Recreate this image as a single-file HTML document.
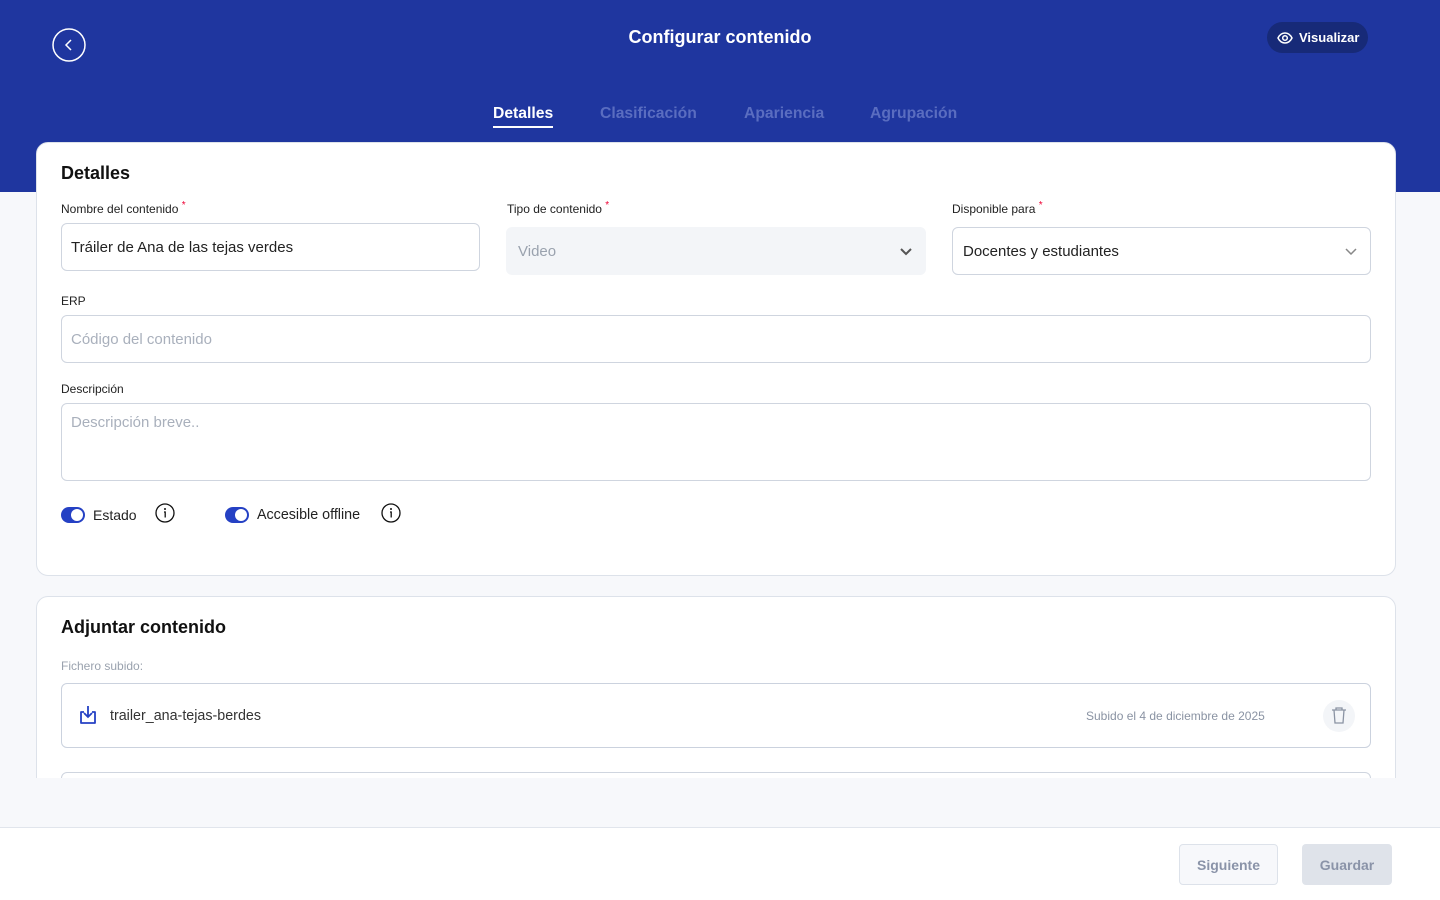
<!DOCTYPE html><html><head><meta charset="utf-8"><style>
*{box-sizing:border-box;margin:0;padding:0}
body{width:1440px;height:900px;background:#f7f8fb;font-family:"Liberation Sans",sans-serif;position:relative;overflow:hidden;color:#111}
.hdr{position:absolute;left:0;top:0;width:1440px;height:192px;background:#1f369f}
.abs{position:absolute}
.card{position:absolute;left:36px;width:1360px;background:#fff;border:1px solid #dde2ea;border-radius:12px}
.lbl{position:absolute;font-size:12px;color:#222}
.lbl sup{color:#e03;font-size:10px}
.inp{position:absolute;border:1px solid #cfd5df;border-radius:6px;background:#fff;font-size:15px;color:#222;padding-left:9px;display:flex;align-items:center}
.ph{color:#a9b0bc}
.tab{position:absolute;top:105px;font-size:15.7px;font-weight:bold;color:#5a6dc0}
</style></head><body>
<div class="hdr"></div>
<svg class="abs" style="left:52px;top:28px" width="34" height="34"><circle cx="17" cy="17" r="16" fill="none" stroke="#fff" stroke-width="1.5"/><path d="M19 12l-5 5 5 5" fill="none" stroke="#fff" stroke-width="1.5"/></svg>
<div class="abs" style="left:0;width:1440px;top:27px;text-align:center;color:#fff;font-size:18px;font-weight:bold">Configurar contenido</div>
<div class="abs" style="left:1267px;top:22px;width:101px;height:31px;border-radius:16px;background:#172a78;color:#fff;font-size:13px;font-weight:bold;display:flex;align-items:center;padding-left:10px">
<svg width="16" height="16" style="margin-right:6px"><path d="M1 8C3 4 6 3 8 3s5 1 7 5c-2 4-5 5-7 5S3 12 1 8z" fill="none" stroke="#fff" stroke-width="1.5"/><circle cx="8" cy="8" r="2.3" fill="none" stroke="#fff" stroke-width="1.5"/></svg>Visualizar</div>
<div class="tab" style="left:493px;color:#fff">Detalles<div style="height:2px;background:#fff;margin-top:3px"></div></div>
<div class="tab" style="left:600px">Clasificación</div>
<div class="tab" style="left:744px">Apariencia</div>
<div class="tab" style="left:870px">Agrupación</div>

<div class="card" style="top:142px;height:434px"></div>
<div class="abs" style="left:61px;top:163px;font-size:18px;font-weight:bold">Detalles</div>
<div class="lbl" style="left:61px;top:200px">Nombre del contenido <sup>*</sup></div>
<div class="lbl" style="left:507px;top:200px">Tipo de contenido <sup>*</sup></div>
<div class="lbl" style="left:952px;top:200px">Disponible para <sup>*</sup></div>
<div class="inp" style="left:61px;top:223px;width:419px;height:48px">Tráiler de Ana de las tejas verdes</div>
<div class="inp" style="left:506px;top:227px;width:420px;height:48px;background:#f3f5f8;border-color:#f3f5f8;color:#9aa2ae;padding-left:11px">Video<svg class="abs" style="right:12px;top:19px" width="14" height="10"><path d="M2 2l5 5 5-5" fill="none" stroke="#555" stroke-width="2"/></svg></div>
<div class="inp" style="left:952px;top:227px;width:419px;height:48px;padding-left:10px">Docentes y estudiantes<svg class="abs" style="right:12px;top:19px" width="14" height="10"><path d="M2 2l5 5 5-5" fill="none" stroke="#888" stroke-width="1.5"/></svg></div>
<div class="lbl" style="left:61px;top:294px">ERP</div>
<div class="inp" style="left:61px;top:315px;width:1310px;height:48px"><span class="ph">Código del contenido</span></div>
<div class="lbl" style="left:61px;top:382px">Descripción</div>
<div class="inp" style="left:61px;top:403px;width:1310px;height:78px;align-items:flex-start;padding-top:10px"><span class="ph">Descripción breve..</span></div>
<div class="abs" style="left:61px;top:507px;width:24px;height:16px;border-radius:8px;background:#2541c4"><div style="position:absolute;right:2px;top:2px;width:12px;height:12px;border-radius:6px;background:#fff"></div></div>
<div class="abs" style="left:93px;top:507px;font-size:14px;color:#222">Estado</div>
<svg class="abs" style="left:155px;top:503px" width="20" height="20"><circle cx="10" cy="10" r="9" fill="none" stroke="#111" stroke-width="1.3"/><circle cx="10" cy="6" r="1" fill="#111"/><path d="M9 9h1.2v5.5" fill="none" stroke="#111" stroke-width="1.3"/></svg>
<div class="abs" style="left:225px;top:507px;width:24px;height:16px;border-radius:8px;background:#2541c4"><div style="position:absolute;right:2px;top:2px;width:12px;height:12px;border-radius:6px;background:#fff"></div></div>
<div class="abs" style="left:257px;top:507px;font-size:14.3px;color:#222">Accesible offline</div>
<svg class="abs" style="left:381px;top:503px" width="20" height="20"><circle cx="10" cy="10" r="9" fill="none" stroke="#111" stroke-width="1.3"/><circle cx="10" cy="6" r="1" fill="#111"/><path d="M9 9h1.2v5.5" fill="none" stroke="#111" stroke-width="1.3"/></svg>

<div class="card" style="top:596px;height:260px"></div>
<div class="abs" style="left:61px;top:617px;font-size:18px;font-weight:bold">Adjuntar contenido</div>
<div class="abs" style="left:61px;top:659px;font-size:12px;color:#9aa2ae">Fichero subido:</div>
<div class="inp" style="left:61px;top:683px;width:1310px;height:65px;border-color:#cbd2de">
<svg class="abs" style="left:15px;top:20px" width="22" height="22"><path d="M7 8H4v11h14V8h-3" fill="none" stroke="#2541c4" stroke-width="1.8" stroke-linejoin="round"/><path d="M11 2v11M7 9l4 4 4-4" fill="none" stroke="#2541c4" stroke-width="1.8"/></svg>
<span style="position:absolute;left:48px;top:24px;font-size:14.3px;color:#333">trailer_ana-tejas-berdes</span>
<span style="position:absolute;left:1024px;top:25px;font-size:12px;color:#8a93a3">Subido el 4 de diciembre de 2025</span>
<div style="position:absolute;left:1261px;top:16px;width:32px;height:32px;border-radius:16px;background:#f3f5f8"><svg width="32" height="32"><path d="M9 10h14M13 10V8h6v2M11 10l1 13h8l1-13" fill="none" stroke="#8a93a3" stroke-width="1.3"/></svg></div>
</div>
<div class="inp" style="left:61px;top:772px;width:1310px;height:60px"></div>
<div class="abs" style="left:0;top:778px;width:1440px;height:49px;background:#f7f8fb"></div>
<div class="abs" style="left:0;top:827px;width:1440px;height:73px;background:#fff;border-top:1px solid #e1e5ec"></div>
<div class="abs" style="left:1179px;top:844px;width:99px;height:41px;border:1px solid #dde2ea;border-radius:4px;background:#f7f8fb;color:#8a93a8;font-weight:bold;font-size:14px;display:flex;align-items:center;justify-content:center">Siguiente</div>
<div class="abs" style="left:1302px;top:844px;width:90px;height:41px;border-radius:4px;background:#dfe3ea;color:#8a93a8;font-weight:bold;font-size:14px;display:flex;align-items:center;justify-content:center">Guardar</div>
</body></html>
